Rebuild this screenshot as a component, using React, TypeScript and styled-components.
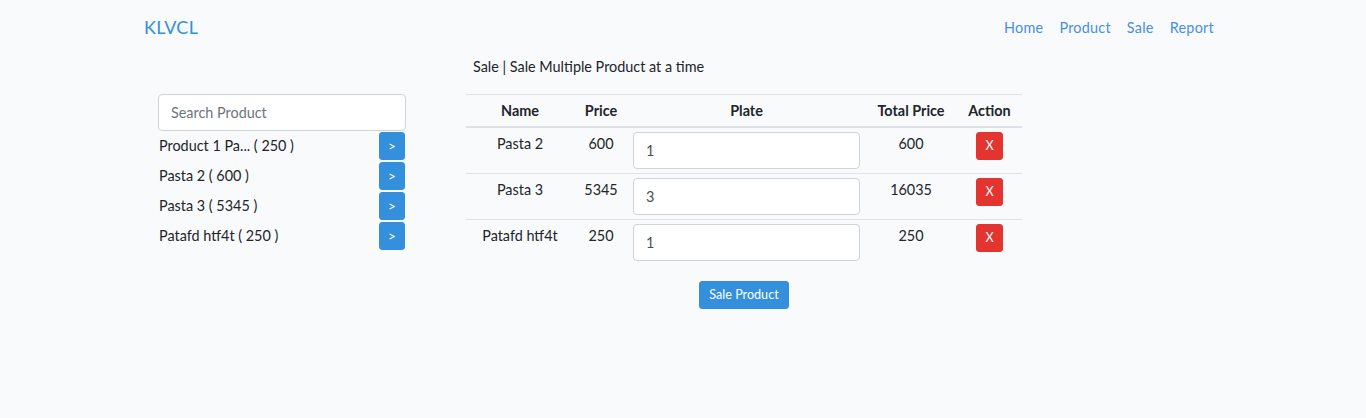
import React from "react";
import styled, { createGlobalStyle } from "styled-components";

const GlobalStyle = createGlobalStyle`
  *, *::before, *::after { box-sizing: border-box; }
  body {
    margin: 0;
    background: #f8fafc;
    font-family: "Lato", "Noto Sans", sans-serif;
    font-size: 14.4px;
    line-height: 1.6;
    color: #212529;
  }
`;

const Container = styled.div`
  width: 1140px;
  margin: 0 auto;
  padding: 0 15px;
`;

const Navbar = styled.nav`
  display: flex;
  align-items: center;
  justify-content: space-between;
  height: 55px;
  padding: 0 16px;
`;

const Brand = styled.a`
  font-size: 18px;
  color: #3490dc;
  text-decoration: none;
  letter-spacing: 0.3px;
`;

const NavList = styled.div`
  display: flex;
`;

const NavLink = styled.a`
  padding: 0 8px;
  color: #4a8fdd;
  text-decoration: none;
  letter-spacing: 0.25px;
`;

const Heading = styled.div`
  padding-left: 345px;
  height: 23px;
  margin-bottom: 16px;
`;

const Row = styled.div`
  display: flex;
  align-items: flex-start;
  padding-left: 30px;
  gap: 60px;
`;

const Side = styled.div`
  width: 248px;
`;

const Input = styled.input`
  display: block;
  width: 100%;
  height: 37px;
  padding: 6px 12px;
  font: inherit;
  color: #495057;
  background: #fff;
  border: 1px solid #ced4da;
  border-radius: 4px;
  &::placeholder { color: #6c757d; }
`;

const ListItem = styled.div`
  display: flex;
  justify-content: space-between;
  align-items: flex-start;
  height: 30px;
  padding-left: 1px;
  line-height: 30px;
`;

const SmallButton = styled.button<{ $variant: "primary" | "danger" }>`
  font-family: inherit;
  font-size: 12.6px;
  line-height: 18.9px;
  padding: 4px 8px;
  height: 28px;
  border: 1px solid ${(p) => (p.$variant === "danger" ? "#e3342f" : "#3490dc")};
  background: ${(p) => (p.$variant === "danger" ? "#e3342f" : "#3490dc")};
  color: #fff;
  border-radius: 3px;
  cursor: pointer;
`;

const GoButton = styled(SmallButton)`
  margin-top: 1px;
  margin-right: 1px;
  width: 26px;
  padding: 4px 0;
  font-size: 13.5px;
`;

const Main = styled.div`
  width: 556px;
  display: flex;
  flex-direction: column;
  align-items: center;
`;

const Table = styled.table`
  width: 556px;
  border-collapse: collapse;
`;

const Th = styled.th<{ $w: number }>`
  width: ${(p) => p.$w}px;
  padding: 4px 4.8px;
  text-align: center;
  font-weight: 700;
  border-top: 1px solid #dee2e6;
  border-bottom: 2px solid #dee2e6;
`;

const Td = styled.td`
  padding: 4px 5px;
  text-align: center;
  vertical-align: top;
  border-top: 1px solid #dee2e6;
`;

const FirstRowTd = styled(Td)`
  border-top: none;
`;

const SaleButton = styled(SmallButton)`
  margin-top: 16px;
  padding: 4px 9px;
`;

const products = [
  "Product 1 Pa... ( 250 )",
  "Pasta 2 ( 600 )",
  "Pasta 3 ( 5345 )",
  "Patafd htf4t ( 250 )",
];

const cart = [
  { name: "Pasta 2", price: 600, qty: "1", total: 600 },
  { name: "Pasta 3", price: 5345, qty: "3", total: 16035 },
  { name: "Patafd htf4t", price: 250, qty: "1", total: 250 },
];

export default function App() {
  return (
    <>
      <GlobalStyle />
      <Container>
        <Navbar>
          <Brand href="#">KLVCL</Brand>
          <NavList>
            <NavLink href="#">Home</NavLink>
            <NavLink href="#">Product</NavLink>
            <NavLink href="#">Sale</NavLink>
            <NavLink href="#">Report</NavLink>
          </NavList>
        </Navbar>
        <Heading>Sale | Sale Multiple Product at a time</Heading>
        <Row>
          <Side>
            <Input placeholder="Search Product" />
            {products.map((p) => (
              <ListItem key={p}>
                <span>{p}</span>
                <GoButton $variant="primary">&gt;</GoButton>
              </ListItem>
            ))}
          </Side>
          <Main>
            <Table>
              <thead>
                <tr>
                  <Th $w={108}>Name</Th>
                  <Th $w={54}>Price</Th>
                  <Th $w={237}>Plate</Th>
                  <Th $w={92}>Total Price</Th>
                  <Th $w={65}>Action</Th>
                </tr>
              </thead>
              <tbody>
                {cart.map((c, i) => {
                  const Cell = i === 0 ? FirstRowTd : Td;
                  return (
                    <tr key={c.name}>
                      <Cell>{c.name}</Cell>
                      <Cell>{c.price}</Cell>
                      <Cell>
                        <Input defaultValue={c.qty} />
                      </Cell>
                      <Cell>{c.total}</Cell>
                      <Cell>
                        <SmallButton $variant="danger">X</SmallButton>
                      </Cell>
                    </tr>
                  );
                })}
              </tbody>
            </Table>
            <SaleButton $variant="primary">Sale Product</SaleButton>
          </Main>
        </Row>
      </Container>
    </>
  );
}
